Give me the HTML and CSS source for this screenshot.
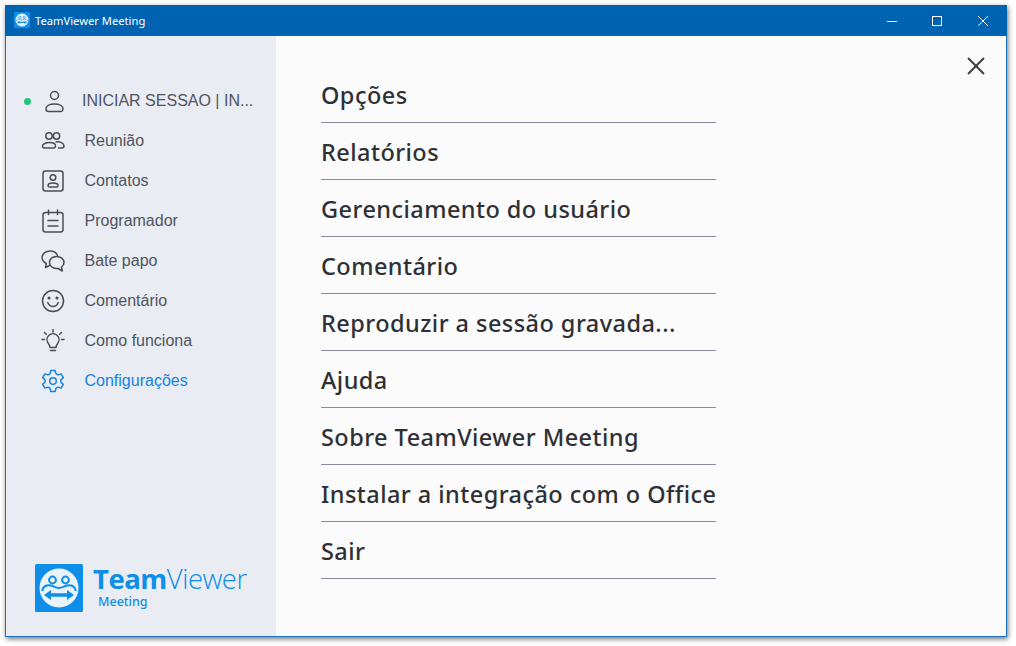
FILE: index.html
```html
<!DOCTYPE html>
<html lang="pt">
<head>
    <meta charset="UTF-8">
    <title>TeamViewer Meeting</title>
    <link rel="stylesheet" href="styles.css">
</head>
<body>
    <svg class="defs" xmlns="http://www.w3.org/2000/svg">
        <symbol id="tvLogo" viewBox="0 0 48 48">
            <rect width="48" height="48" rx="1.5" fill="#0e8ee9"></rect>
            <circle cx="24" cy="24" r="19.5" fill="#e8f3fc"></circle>
            <circle cx="17.5" cy="16" r="3.4" fill="none" stroke="#0e8ee9" stroke-width="2"></circle>
            <circle cx="30.5" cy="16" r="3.4" fill="none" stroke="#0e8ee9" stroke-width="2"></circle>
            <path d="M7 27c1-5 5-6.500 9-5.500 3 .8 5 2.500 8 2.500s5-1.700 8-2.500c4-1 8 .5 9 5.500" fill="none" stroke="#0e8ee9" stroke-width="2"></path>
            <path d="M9 31l7-5v3.200h16V26l7 5-7 5v-3.200H16V36z" fill="#0e8ee9"></path>
        </symbol>
    </svg>
    <div class="window">
        <header class="titlebar">
            <svg class="title-logo"><use href="#tvLogo"></use></svg>
            <span class="title-text">TeamViewer Meeting</span>
            <div class="win-buttons">
                <svg class="win-btn" viewBox="0 0 46 30"><line x1="19" y1="15.500" x2="29" y2="15.500"></line></svg>
                <svg class="win-btn" viewBox="0 0 46 30"><rect x="18.500" y="10.500" width="9" height="9"></rect></svg>
                <svg class="win-btn" viewBox="0 0 46 30"><line x1="18" y1="10" x2="28" y2="20"></line><line x1="28" y1="10" x2="18" y2="20"></line></svg>
            </div>
        </header>
        <div class="content">
            <aside class="sidebar">
                <nav class="nav">
                    <a class="nav-item account">
                        <span class="status-dot"></span>
                        <svg class="nav-icon" viewBox="0 0 24 24"><circle cx="12.500" cy="6.500" r="4"></circle><path d="M6.500 22.500h12a2.500 2.500 0 0 0 2.500-2.500c0-3-3.500-5-8.500-5S4 17 4 20a2.500 2.500 0 0 0 2.500 2.500z"></path></svg>
                        <span class="nav-label">INICIAR SESSAO | IN...</span>
                    </a>
                    <a class="nav-item">
                        <svg class="nav-icon" viewBox="0 0 24 24"><circle cx="8" cy="7" r="3.200"></circle><circle cx="15.500" cy="7" r="3.200"></circle><path d="M3.500 19h9a2 2 0 0 0 2-2c0-2-2.500-3.500-6-3.500S1.500 15 1.500 17a2 2 0 0 0 2 2z"></path><path d="M15 13c4-.6 8 .8 8 4a2 2 0 0 1-2 2h-3.500"></path></svg>
                        <span class="nav-label">Reunião</span>
                    </a>
                    <a class="nav-item">
                        <svg class="nav-icon" viewBox="0 0 24 24"><rect x="2" y="2" width="20" height="20" rx="2.500"></rect><circle cx="12" cy="8.500" r="2.800"></circle><path d="M8.500 18h7a1.500 1.500 0 0 0 1.500-1.500c0-1.500-2-2.500-5-2.500s-5 1-5 2.500A1.500 1.500 0 0 0 8.500 18z"></path></svg>
                        <span class="nav-label">Contatos</span>
                    </a>
                    <a class="nav-item">
                        <svg class="nav-icon" viewBox="0 0 24 24"><rect x="2" y="3.500" width="20" height="19.500" rx="2.500"></rect><path d="M7.500 1v4.500M16.500 1v4.500M7 11.500h10M7 17h10"></path></svg>
                        <span class="nav-label">Programador</span>
                    </a>
                    <a class="nav-item">
                        <svg class="nav-icon" viewBox="0 0 24 24"><path d="M8.500 16.500l-4 2 .8-4C2.500 12.800 1 10.800 1 8.500 1 4.900 4.600 2 9 2c3.500 0 6.500 1.900 7.500 4.500"></path><path d="M15.500 7.500c4.200 0 7.500 2.500 7.500 6 0 2-1 3.500-2.500 4.700l.8 3.800-4.300-2.500c-4.500.5-8.500-2-8.500-6 0-3.500 3-6 7-6z"></path></svg>
                        <span class="nav-label">Bate papo</span>
                    </a>
                    <a class="nav-item">
                        <svg class="nav-icon" viewBox="0 0 24 24"><circle cx="12" cy="12" r="10.500"></circle><path d="M6.800 13.500c1 2.600 3 4 5.200 4s4.200-1.400 5.200-4"></path><circle class="solid" cx="8" cy="9" r=".8"></circle><circle class="solid" cx="16" cy="9" r=".8"></circle></svg>
                        <span class="nav-label">Comentário</span>
                    </a>
                    <a class="nav-item">
                        <svg class="nav-icon" viewBox="0 0 24 24"><path d="M9 18.500c0-2-.8-3-1.800-4.200A6 6 0 1 1 16.800 14.300c-1 1.200-1.800 2.200-1.800 4.200z"></path><path d="M9.500 21.500h5M12 .5v2.500M3.500 3.500l1.800 1.800M20.500 3.500l-1.800 1.800M1 10.500h2.500M20.500 10.500H23"></path></svg>
                        <span class="nav-label">Como funciona</span>
                    </a>
                    <a class="nav-item active">
                        <svg class="nav-icon" viewBox="0 0 24 24"><path d="M9.800 1.500h4.400l.7 3.200 2 1.200 3.200-1 2.200 3.800-2.400 2.200v2.200l2.400 2.200-2.200 3.800-3.200-1-2 1.200-.7 3.200H9.800l-.7-3.200-2-1.200-3.200 1-2.200-3.800 2.400-2.200v-2.200L1.700 8.700l2.200-3.800 3.200 1 2-1.200z"></path><circle cx="12" cy="12" r="3.300"></circle></svg>
                        <span class="nav-label">Configurações</span>
                    </a>
                </nav>
                <div class="brand">
                    <svg class="brand-logo"><use href="#tvLogo"></use></svg>
                    <div class="brand-text">
                        <div class="brand-name"><b>Team</b>Viewer</div>
                        <div class="brand-sub">Meeting</div>
                    </div>
                </div>
            </aside>
            <main class="panel">
                <ul class="menu">
                    <li>Opções</li>
                    <li>Relatórios</li>
                    <li>Gerenciamento do usuário</li>
                    <li>Comentário</li>
                    <li>Reproduzir a sessão gravada...</li>
                    <li>Ajuda</li>
                    <li>Sobre TeamViewer Meeting</li>
                    <li>Instalar a integração com o Office</li>
                    <li>Sair</li>
                </ul>
                <svg class="close" viewBox="0 0 18 18"><line x1="1" y1="1" x2="17" y2="17"></line><line x1="17" y1="1" x2="1" y2="17"></line></svg>
            </main>
        </div>
    </div>
</body>
</html>
```

FILE: styles.css
```css
html, body {
    height: 100%;
}
body {
    margin: 0;
    padding: 5px 9px 9px 5px;
    box-sizing: border-box;
    background-color: #fff;
    font-family: "Liberation Sans", Arial, sans-serif;
    overflow: hidden;
}
.defs {
    display: none;
}
.window {
    display: flex;
    flex-direction: column;
    height: 100%;
    border: 1px solid #1a73c0;
    border-top: none;
    box-sizing: border-box;
    box-shadow: 1px 2px 5px rgba(0, 0, 0, 0.55);
}
.titlebar {
    display: flex;
    align-items: center;
    flex: none;
    height: 31px;
    margin: 0 -1px;
    padding-left: 9px;
    background-color: #0063b1;
    color: #fff;
}
.title-logo {
    width: 16px;
    height: 16px;
    margin-top: -1px;
}
.title-text {
    margin-left: 5px;
    font-family: "Noto Sans", sans-serif;
    font-size: 11.2px;
}
.win-buttons {
    display: flex;
    margin-left: auto;
    padding-right: 1px;
}
.win-btn {
    width: 46px;
    height: 30px;
    fill: none;
    stroke: #fff;
    stroke-width: 1;
}
.content {
    display: flex;
    flex: 1;
    min-height: 0;
}
.sidebar {
    display: flex;
    flex-direction: column;
    flex: none;
    width: 270px;
    background-color: #e9ecf2;
}
.nav {
    display: flex;
    flex-direction: column;
    padding-top: 45px;
}
.nav-item {
    display: flex;
    align-items: center;
    height: 40px;
    padding-left: 35px;
    color: #4f5461;
    font-size: 16px;
}
.nav-icon {
    flex: none;
    width: 24px;
    height: 24px;
    fill: none;
    stroke: #4a4d55;
    stroke-width: 1.500;
    stroke-linecap: round;
    stroke-linejoin: round;
}
.nav-icon .solid {
    fill: #4a4d55;
}
.nav-label {
    margin-left: 19.500px;
    white-space: nowrap;
}
.account {
    position: relative;
    padding-left: 36px;
}
.account .nav-label {
    margin-left: 16px;
}
.status-dot {
    position: absolute;
    left: 18px;
    top: 17px;
    width: 7px;
    height: 7px;
    border-radius: 50%;
    background-color: #22c47a;
}
.active {
    color: #1583e0;
}
.active .nav-icon {
    stroke: #1583e0;
}
.brand {
    display: flex;
    align-items: flex-start;
    margin-top: auto;
    padding: 0 0 24px 29px;
    color: #0e8ee9;
}
.brand-logo {
    flex: none;
    width: 48px;
    height: 48px;
}
.brand-text {
    margin-left: 10px;
}
.brand-name {
    font-family: "Open Sans", sans-serif;
    font-size: 27.5px;
    font-weight: 300;
    line-height: 30px;
    letter-spacing: -0.5px;
}
.brand-name b {
    font-weight: 700;
}
.brand-sub {
    margin-left: 5px;
    font-family: "Noto Sans", sans-serif;
    font-size: 12.500px;
    font-weight: 500;
    line-height: 16px;
}
.panel {
    position: relative;
    flex: 1;
    background-color: #fbfbfc;
}
.menu {
    width: 395px;
    margin: 0;
    padding: 30px 0 0 45px;
    list-style: none;
}
.menu li {
    height: 56px;
    border-bottom: 1px solid #8b8b9d;
    color: #2e3035;
    font-family: "Noto Sans", sans-serif;
    font-size: 23.500px;
    font-weight: 500;
    line-height: 58px;
    letter-spacing: 0.45px;
    white-space: nowrap;
}
.close {
    position: absolute;
    top: 21px;
    right: 21px;
    width: 18px;
    height: 18px;
    stroke: #3a3d42;
    stroke-width: 2;
}
```
